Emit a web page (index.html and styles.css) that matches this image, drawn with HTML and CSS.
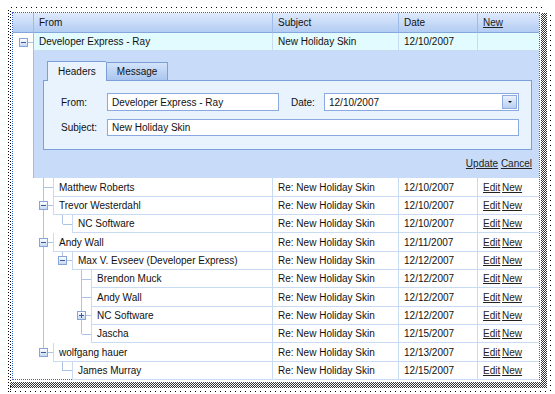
FILE: index.html
```html
<!DOCTYPE html>
<html lang="en">

<head>
    <meta charset="UTF-8">
    <meta name="viewport" content="width=device-width, initial-scale=1.0">
    <title>Tree list - edit form</title>
    <link rel="stylesheet" href="styles.css">
</head>

<body>
    <div class="frame">
        <div class="grid">
            <table class="tree">
                <colgroup>
                    <col class="c-ind0">
                    <col class="c-ind1">
                    <col class="c-ind2">
                    <col class="c-ind3">
                    <col class="c-from">
                    <col class="c-subject">
                    <col class="c-date">
                    <col class="c-cmd">
                </colgroup>
                <tr class="head">
                    <th></th>
                    <th colspan="4">From</th>
                    <th>Subject</th>
                    <th>Date</th>
                    <th><a href="#">New</a></th>
                </tr>
                <tr class="row focused">
                    <td class="ind t-root"><span class="exp minus"></span></td>
                    <td class="cell" colspan="4">Developer Express - Ray</td>
                    <td class="cell">New Holiday Skin</td>
                    <td class="cell">12/10/2007</td>
                    <td class="cell"></td>
                </tr>
                <tr class="edit">
                    <td class="ind"></td>
                    <td class="edit-cell" colspan="7">
                        <div class="tabs">
                            <span class="tab active">Headers</span>
                            <span class="tab">Message</span>
                        </div>
                        <div class="panel">
                            <label>From:</label>
                            <input class="field" type="text" value="Developer Express - Ray">
                            <label class="date-label">Date:</label>
                            <div class="field combo">
                                <span>12/10/2007</span>
                                <span class="drop"></span>
                            </div>
                            <label>Subject:</label>
                            <input class="field wide" type="text" value="New Holiday Skin">
                        </div>
                        <div class="edit-cmds">
                            <a href="#">Update</a> <a href="#">Cancel</a>
                        </div>
                    </td>
                </tr>
                <tr class="row">
                    <td class="ind"></td>
                    <td class="ind t-tee"></td>
                    <td class="cell first" colspan="3">Matthew Roberts</td>
                    <td class="cell">Re: New Holiday Skin</td>
                    <td class="cell">12/10/2007</td>
                    <td class="cell"><a href="#">Edit</a> <a href="#">New</a></td>
                </tr>
                <tr class="row">
                    <td class="ind"></td>
                    <td class="ind t-tee"><span class="exp minus"></span></td>
                    <td class="cell first" colspan="3">Trevor Westerdahl</td>
                    <td class="cell">Re: New Holiday Skin</td>
                    <td class="cell">12/10/2007</td>
                    <td class="cell"><a href="#">Edit</a> <a href="#">New</a></td>
                </tr>
                <tr class="row">
                    <td class="ind"></td>
                    <td class="ind t-pipe"></td>
                    <td class="ind t-end"></td>
                    <td class="cell first" colspan="2">NC Software</td>
                    <td class="cell">Re: New Holiday Skin</td>
                    <td class="cell">12/10/2007</td>
                    <td class="cell"><a href="#">Edit</a> <a href="#">New</a></td>
                </tr>
                <tr class="row">
                    <td class="ind"></td>
                    <td class="ind t-tee"><span class="exp minus"></span></td>
                    <td class="cell first" colspan="3">Andy Wall</td>
                    <td class="cell">Re: New Holiday Skin</td>
                    <td class="cell">12/11/2007</td>
                    <td class="cell"><a href="#">Edit</a> <a href="#">New</a></td>
                </tr>
                <tr class="row">
                    <td class="ind"></td>
                    <td class="ind t-pipe"></td>
                    <td class="ind t-end"><span class="exp minus"></span></td>
                    <td class="cell first" colspan="2">Max V. Evseev (Developer Express)</td>
                    <td class="cell">Re: New Holiday Skin</td>
                    <td class="cell">12/12/2007</td>
                    <td class="cell"><a href="#">Edit</a> <a href="#">New</a></td>
                </tr>
                <tr class="row">
                    <td class="ind"></td>
                    <td class="ind t-pipe"></td>
                    <td class="ind"></td>
                    <td class="ind t-tee"></td>
                    <td class="cell first">Brendon Muck</td>
                    <td class="cell">Re: New Holiday Skin</td>
                    <td class="cell">12/12/2007</td>
                    <td class="cell"><a href="#">Edit</a> <a href="#">New</a></td>
                </tr>
                <tr class="row">
                    <td class="ind"></td>
                    <td class="ind t-pipe"></td>
                    <td class="ind"></td>
                    <td class="ind t-tee"></td>
                    <td class="cell first">Andy Wall</td>
                    <td class="cell">Re: New Holiday Skin</td>
                    <td class="cell">12/12/2007</td>
                    <td class="cell"><a href="#">Edit</a> <a href="#">New</a></td>
                </tr>
                <tr class="row">
                    <td class="ind"></td>
                    <td class="ind t-pipe"></td>
                    <td class="ind"></td>
                    <td class="ind t-tee"><span class="exp plus"></span></td>
                    <td class="cell first">NC Software</td>
                    <td class="cell">Re: New Holiday Skin</td>
                    <td class="cell">12/12/2007</td>
                    <td class="cell"><a href="#">Edit</a> <a href="#">New</a></td>
                </tr>
                <tr class="row">
                    <td class="ind"></td>
                    <td class="ind t-pipe"></td>
                    <td class="ind"></td>
                    <td class="ind t-end"></td>
                    <td class="cell first">Jascha</td>
                    <td class="cell">Re: New Holiday Skin</td>
                    <td class="cell">12/15/2007</td>
                    <td class="cell"><a href="#">Edit</a> <a href="#">New</a></td>
                </tr>
                <tr class="row">
                    <td class="ind"></td>
                    <td class="ind t-end"><span class="exp minus"></span></td>
                    <td class="cell first" colspan="3">wolfgang hauer</td>
                    <td class="cell">Re: New Holiday Skin</td>
                    <td class="cell">12/13/2007</td>
                    <td class="cell"><a href="#">Edit</a> <a href="#">New</a></td>
                </tr>
                <tr class="row">
                    <td class="ind"></td>
                    <td class="ind"></td>
                    <td class="ind t-end"></td>
                    <td class="cell first" colspan="2">James Murray</td>
                    <td class="cell">Re: New Holiday Skin</td>
                    <td class="cell">12/15/2007</td>
                    <td class="cell"><a href="#">Edit</a> <a href="#">New</a></td>
                </tr>
            </table>
        </div>
    </div>
</body>

</html>
```

FILE: styles.css
```css
* {
    margin: 0;
    padding: 0;
    box-sizing: border-box;
}

body {
    background: #fff;
    font-family: "Liberation Sans", Arial, sans-serif;
    font-size: 10px;
    color: #111;
}

a {
    color: #222;
}

/* screenshot frame: sparse dots top/left, dense dotted shadow right/bottom */
.frame {
    width: 544px;
    height: 385px;
    margin: 7px 0 0 8px;
    padding: 5px 0 0 4px;
    position: relative;
    background:
        repeating-linear-gradient(to right, #000 0 1px, transparent 1px 5px) 3px 0 / 531px 1px no-repeat,
        repeating-linear-gradient(to bottom, #000 0 1px, transparent 1px 3px) 0 3px / 1px 382px no-repeat,
        repeating-linear-gradient(to bottom, #000 0 1px, transparent 1px 3px) 2px 4px / 1px 381px no-repeat,
        repeating-linear-gradient(to right, #000 0 1px, transparent 1px 5px) 2px 384px / 540px 1px no-repeat,
        repeating-linear-gradient(to bottom, #000 0 1px, transparent 1px 5px) 542px 8px / 1px 376px no-repeat;
}

.frame::before,
.frame::after {
    content: "";
    position: absolute;
    background: repeating-conic-gradient(#333 0 25%, transparent 0 50%) 0 0 / 2px 2px;
}

.frame::before {
    left: 533px;
    top: 6px;
    width: 6px;
    height: 375px;
}

.frame::after {
    left: 2px;
    top: 375px;
    width: 537px;
    height: 6px;
}

.grid {
    width: 528px;
    height: 368px;
    border: 1px dotted #2f63d0;
    background: #fff;
    position: relative;
    z-index: 1;
}

.tree {
    width: 526px;
    table-layout: fixed;
    border-collapse: separate;
    border-spacing: 0;
}

.c-ind0,
.c-ind1 {
    width: 20px;
}

.c-ind2,
.c-ind3 {
    width: 19px;
}

.c-from {
    width: 181px;
}

.c-subject {
    width: 126px;
}

.c-date {
    width: 79px;
}

.c-cmd {
    width: 62px;
}

/* header */
.head {
    height: 20px;
}

.head th {
    font-weight: normal;
    text-align: left;
    padding-left: 5px;
    background: linear-gradient(#dfeafc, #b2ccf3);
    border-left: 1px solid #9ebbe9;
    border-bottom: 1px solid #85a7de;
    white-space: nowrap;
}

.head th:first-child {
    border-left: none;
}

/* data rows */
.row {
    height: 18.35px;
}

.cell {
    padding-left: 5px;
    border-left: 1px solid #c9daf3;
    border-bottom: 1px solid #c9daf3;
    white-space: nowrap;
    overflow: hidden;
}

.focused .cell {
    background: #e2fbff;
}

.focused .cell:nth-child(2) {
    border-left: 1px solid #9ebbe9;
}

.cell a {
    margin-right: -1px;
}

/* tree lines */
.ind {
    border: none;
    text-align: center;
    background-repeat: no-repeat;
}

.t-pipe {
    background-image: linear-gradient(#adc3e6, #adc3e6);
    background-size: 1px 100%;
    background-position: 50% 0;
}

.t-tee {
    background-image: linear-gradient(#adc3e6, #adc3e6), linear-gradient(#adc3e6, #adc3e6);
    background-size: 1px 100%, 50% 1px;
    background-position: 50% 0, right 0 top 50%;
}

.t-end {
    background-image: linear-gradient(#adc3e6, #adc3e6), linear-gradient(#adc3e6, #adc3e6);
    background-size: 1px 50%, 50% 1px;
    background-position: 50% 0, right 0 top 50%;
}

.t-root {
    background-image: linear-gradient(#adc3e6, #adc3e6);
    background-size: 50% 1px;
    background-position: right 0 top 50%;
}

.exp {
    display: block;
    width: 9px;
    height: 9px;
    margin: 0 auto;
    position: relative;
    border: 1px solid #86a4d6;
    background: linear-gradient(#fdfeff, #c6d8f3);
}

.exp::before {
    content: "";
    position: absolute;
    left: 1px;
    top: 3px;
    width: 5px;
    height: 1px;
    background: #3b5b98;
}

.plus::after {
    content: "";
    position: absolute;
    left: 3px;
    top: 1px;
    width: 1px;
    height: 5px;
    background: #3b5b98;
}

/* edit form */
.edit {
    height: 127px;
}

.edit-cell {
    vertical-align: top;
    background: #c8dcf9;
    border-left: 1px solid #9ebbe9;
    padding: 9px 7px 0 9px;
}

.tabs {
    display: flex;
    padding-left: 4px;
    height: 20px;
    align-items: flex-end;
}

.tab {
    height: 18px;
    padding: 3px 10px 0;
    border: 1px solid #7d9fd9;
    border-bottom: none;
    background: linear-gradient(#d3e3f9, #aac6f0);
}

.tab.active {
    height: 20px;
    padding-top: 4px;
    background: #e9f3fe;
    position: relative;
    top: 1px;
    border-right: none;
}

.panel {
    width: 489px;
    height: 70px;
    border: 1px solid #7d9fd9;
    background: #e9f3fe;
    padding: 12px 12px 0 17px;
    display: grid;
    grid-template-columns: 46px 172px 45px 1fr;
    grid-template-rows: 18px 18px;
    row-gap: 7px;
    align-items: center;
}

.panel label {
    color: #111;
}

.date-label {
    padding-left: 12px;
}

.field {
    height: 18px;
    border: 1px solid #8aa9e0;
    background: #fff;
    font: inherit;
    color: #111;
    padding-left: 4px;
    outline: none;
}

.wide {
    grid-column: 2 / 5;
    height: 17px;
}

.combo {
    display: flex;
    align-items: center;
    justify-content: space-between;
    padding-right: 1px;
}

.drop {
    width: 15px;
    height: 14px;
    border: 1px solid #8eacdf;
    background: linear-gradient(#eaf2fd, #b8cff2);
    position: relative;
}

.drop::after {
    content: "";
    position: absolute;
    left: 5px;
    top: 5px;
    border-left: 2px solid transparent;
    border-right: 2px solid transparent;
    border-top: 2px solid #111;
}

.edit-cmds {
    text-align: right;
    margin-top: 8px;
}
```
